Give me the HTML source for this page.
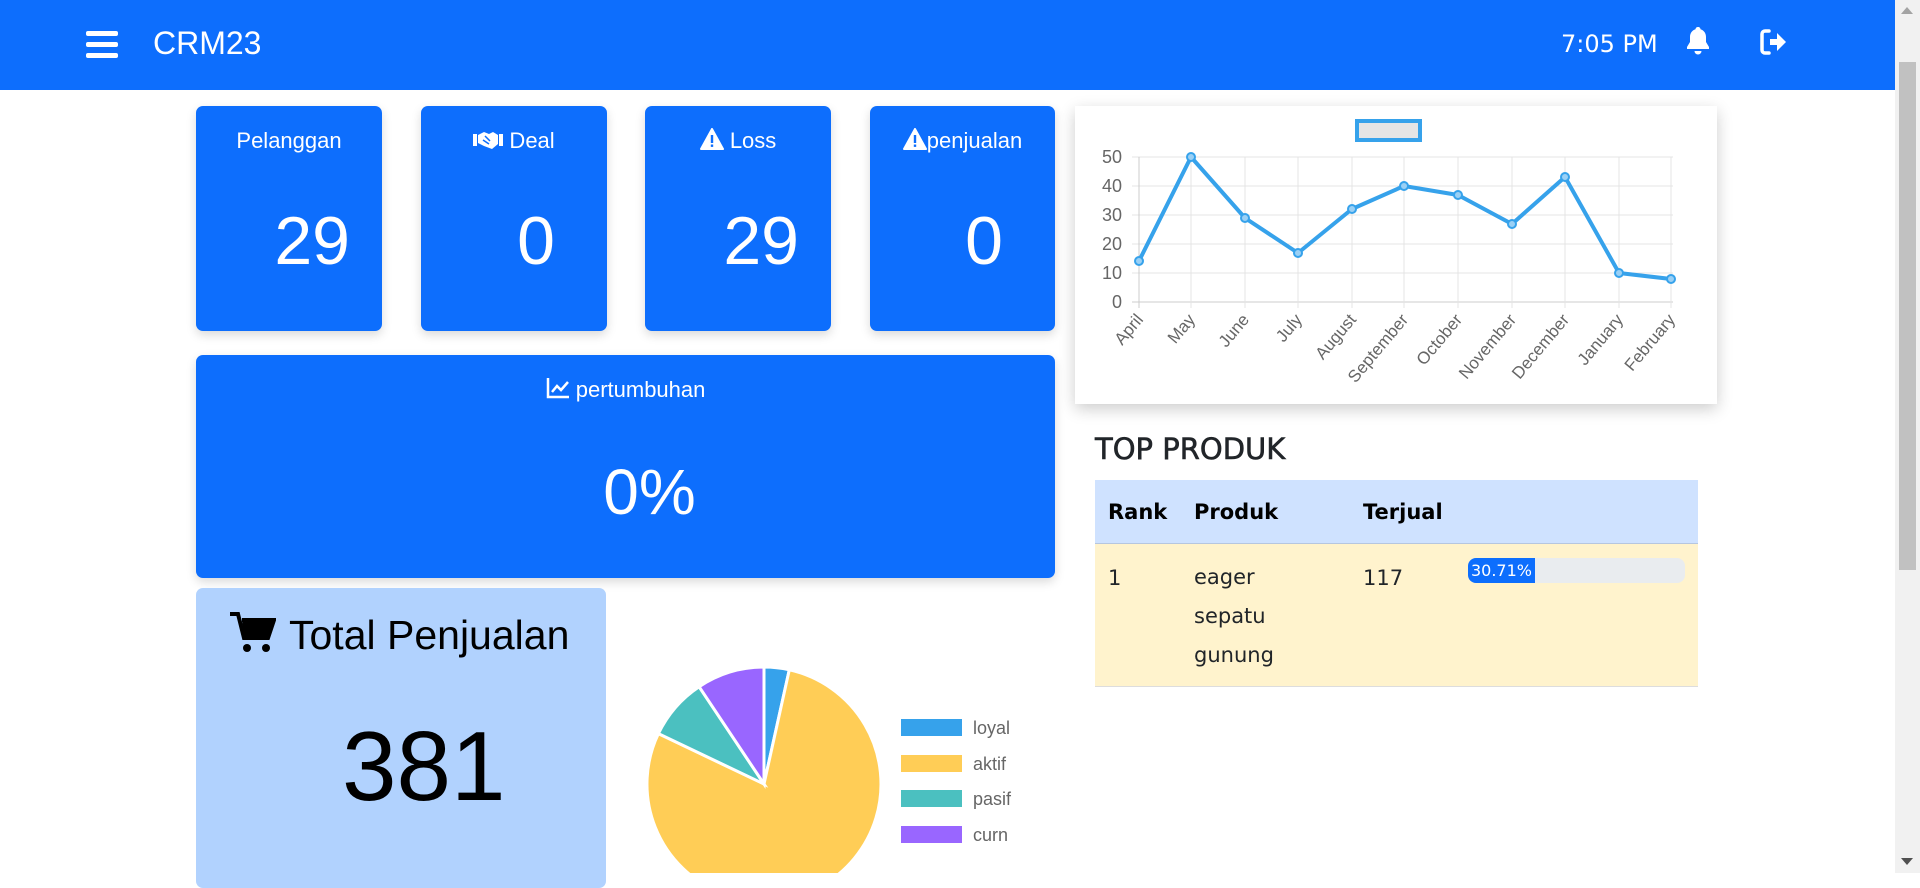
<!DOCTYPE html>
<html><head><meta charset="utf-8"><style>
*{box-sizing:border-box;margin:0;padding:0}
body{width:1920px;height:873px;overflow:hidden;background:#fff;font-family:"Liberation Sans",sans-serif;position:relative}
.nav{position:absolute;left:0;top:0;width:1895px;height:90px;background:#0d6efd;color:#fff}
.abs{position:absolute}
.card{position:absolute;background:#0d6efd;border-radius:7px;color:#fff;box-shadow:0 4px 10px rgba(0,0,0,.15)}
.ct{position:absolute;top:22px;left:0;right:0;text-align:center;font-size:22px}
.cn{position:absolute;top:96px;font-size:68px}
.sb{position:absolute;right:0;top:0;width:25px;height:873px;background:#f1f1f1}
.warn{vertical-align:-2px}
</style></head><body>
<div class="nav">
 <div class="abs" style="left:86px;top:31px;width:32px;height:5px;background:#fff;border-radius:2px;box-shadow:0 11px 0 #fff,0 22px 0 #fff"></div>
 <div class="abs" style="left:153px;top:25px;font-size:32px;font-family:'Liberation Sans',sans-serif">CRM23</div>
 <div class="abs" style="left:1561px;top:30px;font-size:24px;font-family:'DejaVu Sans',sans-serif">7:05 PM</div>
 <svg class="abs" style="left:1686px;top:27px" width="24" height="28" viewBox="0 0 24 28"><path d="M12 0c1.5 0 2.5 1 2.5 2.3C18 3.3 20 6.5 20 10v5l3 5v2H1v-2l3-5v-5c0-3.5 2-6.7 5.5-7.7C9.5 1 10.5 0 12 0zM8.5 24h7a3.5 3.5 0 01-7 0z" fill="#fff"/></svg>
 <svg class="abs" style="left:1760px;top:29px" width="28" height="26" viewBox="0 0 28 26"><path d="M9 2H5a3 3 0 00-3 3v16a3 3 0 003 3h4" stroke="#fff" stroke-width="3.5" fill="none" stroke-linecap="round"/><path d="M10 10h7V4l9 9-9 9v-6h-7z" fill="#fff"/></svg>
</div>
<div class="sb"><div class="abs" style="left:4px;top:62px;width:17px;height:508px;background:#c1c1c1"></div>
<div class="abs" style="left:6px;top:7px;border:6px solid transparent;border-bottom:7px solid #a3a3a3;border-top:0"></div>
<div class="abs" style="left:6px;top:858px;border:6px solid transparent;border-top:7px solid #505050;border-bottom:0"></div></div>

<div class="card" style="left:196px;top:106px;width:186px;height:225px"><div class="ct">Pelanggan</div><div class="cn" style="right:32px">29</div></div>
<div class="card" style="left:421px;top:106px;width:186px;height:225px"><div class="ct"><svg class="warn" width="30" height="20" viewBox="0 0 30 20"><rect x="0" y="4" width="4" height="12" fill="#fff"/><rect x="26" y="4" width="4" height="12" fill="#fff"/><path d="M5 5l6-3 5 2 4-2 5 3v9l-6 5-8-3-6-3z" fill="#fff"/><path d="M12 6l5 5M10 10l6 4" stroke="#0d6efd" stroke-width="1.5"/></svg> Deal</div><div class="cn" style="right:52px">0</div></div>
<div class="card" style="left:645px;top:106px;width:186px;height:225px"><div class="ct"><svg class="warn" width="24" height="22" viewBox="0 0 24 22"><path d="M12 1L23 21H1z" fill="#fff" stroke="#fff" stroke-linejoin="round" stroke-width="2"/><rect x="10.8" y="7" width="2.4" height="8" fill="#0d6efd"/><rect x="10.8" y="16.5" width="2.4" height="2.4" fill="#0d6efd"/></svg> Loss</div><div class="cn" style="right:32px">29</div></div>
<div class="card" style="left:870px;top:106px;width:185px;height:225px"><div class="ct"><svg class="warn" width="24" height="22" viewBox="0 0 24 22"><path d="M12 1L23 21H1z" fill="#fff" stroke="#fff" stroke-linejoin="round" stroke-width="2"/><rect x="10.8" y="7" width="2.4" height="8" fill="#0d6efd"/><rect x="10.8" y="16.5" width="2.4" height="2.4" fill="#0d6efd"/></svg>penjualan</div><div class="cn" style="right:52px">0</div></div>

<div class="card" style="left:196px;top:355px;width:859px;height:223px"><div class="ct" style="top:22px">
<svg width="24" height="22" viewBox="0 0 24 22" style="vertical-align:-2px"><path d="M2 1v19h21" stroke="#fff" stroke-width="2.5" fill="none"/><path d="M6 15l5-6 4 4 7-8" stroke="#fff" stroke-width="2.5" fill="none"/></svg> pertumbuhan</div>
<div class="abs" style="left:48px;right:0;top:100px;text-align:center;font-size:64px">0%</div></div>

<div class="abs" style="left:196px;top:588px;width:410px;height:300px;background:#b1d2fe;border-radius:7px">
 <svg class="abs" style="left:34px;top:24px" width="46" height="42" viewBox="0 0 46 42"><path d="M0 2h8l6 24h24l6-18H12" fill="none" stroke="#000" stroke-width="4"/><path d="M12 8h32l-6 18H14z" fill="#000"/><circle cx="17" cy="36" r="4"/><circle cx="36" cy="36" r="4"/></svg>
 <div class="abs" style="left:93px;top:24px;font-size:41px;color:#000">Total Penjualan</div>
 <div class="abs" style="left:146px;top:122px;font-size:98px;color:#000">381</div>
</div>

<svg class="abs" style="left:0;top:0" width="1900" height="873">
 <g stroke="#fff" stroke-width="3">
 <path d="M764 784L764 667A117 117 0 0 1 789.3 669.8Z" fill="#36a2eb"/>
 <path d="M764 784L789.3 669.8A117 117 0 1 1 658.4 733.6Z" fill="#ffcd56"/>
 <path d="M764 784L658.4 733.6A117 117 0 0 1 699.1 686.7Z" fill="#4bc0c0"/>
 <path d="M764 784L699.1 686.7A117 117 0 0 1 764 667Z" fill="#9966ff"/>
 </g>
 <g font-size="18" fill="#666" font-family="Liberation Sans,sans-serif">
 <rect x="901" y="719" width="61" height="17" fill="#36a2eb"/><text x="973" y="734">loyal</text>
 <rect x="901" y="755" width="61" height="17" fill="#ffcd56"/><text x="973" y="770">aktif</text>
 <rect x="901" y="790" width="61" height="17" fill="#4bc0c0"/><text x="973" y="805">pasif</text>
 <rect x="901" y="826" width="61" height="17" fill="#9966ff"/><text x="973" y="841">curn</text>
 </g>
</svg>

<div class="abs" style="left:1075px;top:106px;width:642px;height:298px;background:#fff;box-shadow:0 5px 15px rgba(0,0,0,.2)"></div>
<svg class="abs" style="left:0;top:0" width="1900" height="873">
 <rect x="1357" y="121" width="63" height="19" fill="#e5e5e5" stroke="#36a2eb" stroke-width="4"/>
 <g stroke="#e4e4e4" stroke-width="1">
 <line x1="1132" y1="157" x2="1673" y2="157"/><line x1="1132" y1="186" x2="1673" y2="186"/><line x1="1132" y1="215" x2="1673" y2="215"/><line x1="1132" y1="244" x2="1673" y2="244"/><line x1="1132" y1="273" x2="1673" y2="273"/><line x1="1132" y1="302" x2="1673" y2="302" stroke="#ccc"/>
 <line x1="1139" y1="157" x2="1139" y2="308" stroke="#ccc"/><line x1="1191" y1="157" x2="1191" y2="308"/><line x1="1245" y1="157" x2="1245" y2="308"/><line x1="1298" y1="157" x2="1298" y2="308"/><line x1="1352" y1="157" x2="1352" y2="308"/><line x1="1404" y1="157" x2="1404" y2="308"/><line x1="1458" y1="157" x2="1458" y2="308"/><line x1="1512" y1="157" x2="1512" y2="308"/><line x1="1565" y1="157" x2="1565" y2="308"/><line x1="1619" y1="157" x2="1619" y2="308"/><line x1="1671" y1="157" x2="1671" y2="308"/>
 </g>
 <g font-size="18" fill="#666" text-anchor="end" font-family="Liberation Sans,sans-serif">
 <text x="1122" y="163">50</text><text x="1122" y="192">40</text><text x="1122" y="221">30</text><text x="1122" y="250">20</text><text x="1122" y="279">10</text><text x="1122" y="308">0</text>
 </g>
 <g font-size="17" fill="#666" text-anchor="end" font-family="Liberation Sans,sans-serif">
 <text transform="translate(1144,320) rotate(-50)">April</text>
 <text transform="translate(1196,320) rotate(-50)">May</text>
 <text transform="translate(1250,320) rotate(-50)">June</text>
 <text transform="translate(1303,320) rotate(-50)">July</text>
 <text transform="translate(1357,320) rotate(-50)">August</text>
 <text transform="translate(1409,320) rotate(-50)">September</text>
 <text transform="translate(1463,320) rotate(-50)">October</text>
 <text transform="translate(1517,320) rotate(-50)">November</text>
 <text transform="translate(1570,320) rotate(-50)">December</text>
 <text transform="translate(1624,320) rotate(-50)">January</text>
 <text transform="translate(1676,320) rotate(-50)">February</text>
 </g>
 <polyline points="1139,261 1191,157 1245,218 1298,253 1352,209 1404,186 1458,195 1512,224 1565,177 1619,273 1671,279" fill="none" stroke="#36a2eb" stroke-width="4" stroke-linejoin="round"/>
 <g fill="#9ad0f5" stroke="#36a2eb" stroke-width="2">
 <circle cx="1139" cy="261" r="4"/><circle cx="1191" cy="157" r="4"/><circle cx="1245" cy="218" r="4"/><circle cx="1298" cy="253" r="4"/><circle cx="1352" cy="209" r="4"/><circle cx="1404" cy="186" r="4"/><circle cx="1458" cy="195" r="4"/><circle cx="1512" cy="224" r="4"/><circle cx="1565" cy="177" r="4"/><circle cx="1619" cy="273" r="4"/><circle cx="1671" cy="279" r="4"/>
 </g>
</svg>

<div class="abs" style="left:1095px;top:432px;font-size:29px;font-family:'DejaVu Sans',sans-serif;color:#212529;-webkit-text-stroke:0.6px #212529">TOP PRODUK</div>
<div class="abs" style="left:1095px;top:480px;width:603px;height:64px;background:#cfe2ff;border-bottom:1px solid #b6c6df"></div>
<div class="abs" style="left:1095px;top:544px;width:603px;height:143px;background:#fff3cd;border-bottom:1px solid #ddd"></div>
<div class="abs" style="font-family:'DejaVu Sans',sans-serif;font-weight:bold;font-size:21px;color:#000;top:500px;left:1108px">Rank</div>
<div class="abs" style="font-family:'DejaVu Sans',sans-serif;font-weight:bold;font-size:21px;color:#000;top:500px;left:1194px">Produk</div>
<div class="abs" style="font-family:'DejaVu Sans',sans-serif;font-weight:bold;font-size:21px;color:#000;top:500px;left:1363px">Terjual</div>
<div class="abs" style="font-family:'DejaVu Sans',sans-serif;font-size:21px;color:#212529;top:566px;left:1108px">1</div>
<div class="abs" style="font-family:'DejaVu Sans',sans-serif;font-size:21px;color:#212529;top:566px;left:1194px;line-height:39px;margin-top:-8px">eager<br>sepatu<br>gunung</div>
<div class="abs" style="font-family:'DejaVu Sans',sans-serif;font-size:21px;color:#212529;top:566px;left:1363px">117</div>
<div class="abs" style="left:1468px;top:558px;width:217px;height:25px;background:#e9ecef;border-radius:8px;overflow:hidden"><div style="width:67px;height:25px;background:#0d6efd;color:#fff;font-size:16px;line-height:25px;text-align:center;font-family:'DejaVu Sans',sans-serif">30.71%</div></div>
</body></html>
